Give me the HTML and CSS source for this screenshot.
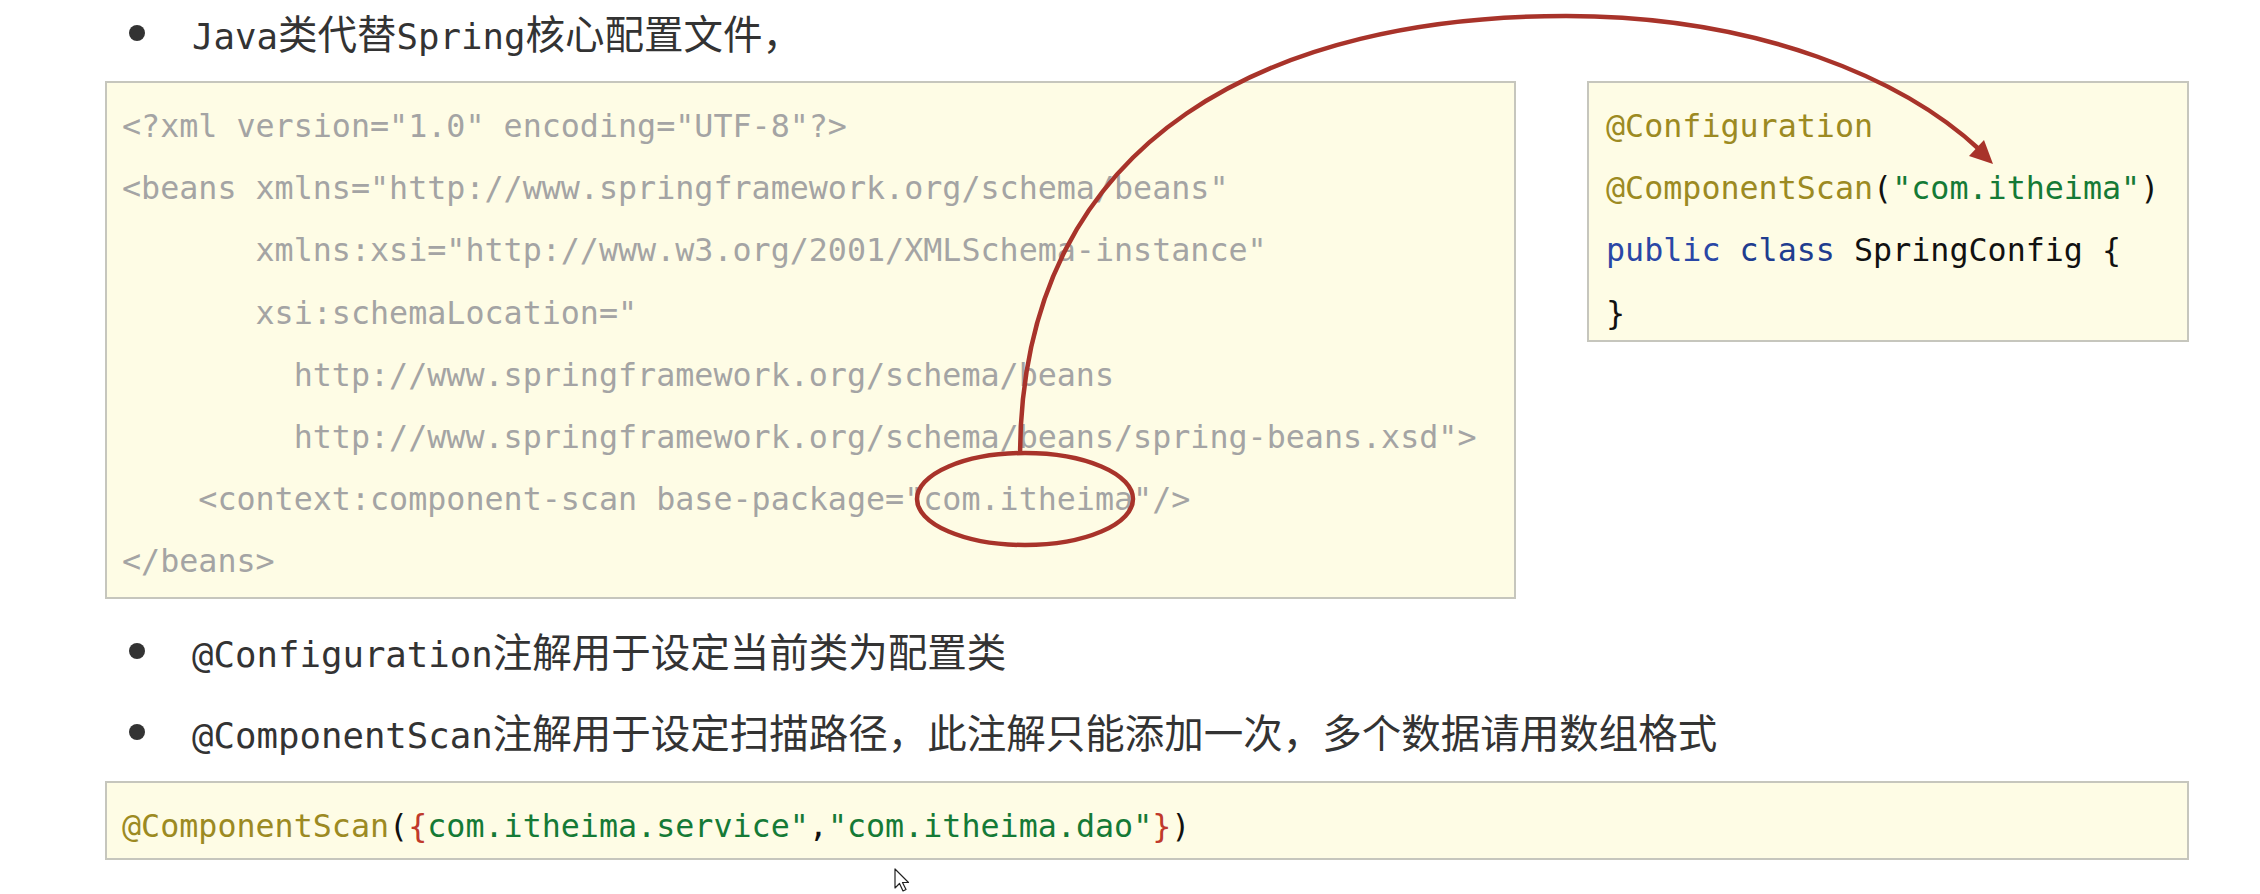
FILE: index.html
```html
<!DOCTYPE html>
<html lang="zh-CN">
<head>
<meta charset="utf-8">
<title>Spring Config</title>
<link rel="stylesheet" href="styles.css">
</head>
<body>
<div class="page">
  <div class="bullet first"><span class="dot"></span><span class="txt"><span class="mono">Java</span>类代替<span class="mono">Spring</span>核心配置文件，</span></div>

  <div class="row">
<pre class="code xml">&lt;?xml version="1.0" encoding="UTF-8"?&gt;
&lt;beans xmlns="http://www.springframework.org/schema/beans"
       xmlns:xsi="http://www.w3.org/2001/XMLSchema-instance"
       xsi:schemaLocation="
         http://www.springframework.org/schema/beans
         http://www.springframework.org/schema/beans/spring-beans.xsd"&gt;
    &lt;context:component-scan base-package="com.itheima"/&gt;
&lt;/beans&gt;</pre>
<pre class="code java"><span class="ann">@Configuration</span>
<span class="ann">@ComponentScan</span>(<span class="str">"com.itheima"</span>)
<span class="kw">public</span> <span class="kw2">class</span> SpringConfig {
}</pre>
  </div>

  <div class="bullet after"><span class="dot"></span><span class="txt"><span class="mono">@Configuration</span>注解用于设定当前类为配置类</span></div>
  <div class="bullet"><span class="dot"></span><span class="txt"><span class="mono">@ComponentScan</span>注解用于设定扫描路径，此注解只能添加一次，多个数据请用数组格式</span></div>

<pre class="code single"><span class="ann">@ComponentScan</span>(<span class="brace">{</span><span class="str">com.itheima.service"</span>,<span class="str">"com.itheima.dao"</span><span class="brace">}</span>)</pre>

  <svg class="annot" width="2260" height="894" viewBox="0 0 2260 894">
    <ellipse cx="1025" cy="499" rx="108" ry="46" fill="none" stroke="#a8332a" stroke-width="4.5"/>
    <path d="M 1020 454 C 1022 130, 1280 16, 1566 16 C 1760 16, 1905 80, 1980 150" fill="none" stroke="#a8332a" stroke-width="4.5"/>
    <polygon points="1993,164 1969,156 1984,140" fill="#a8332a"/>
  </svg>

  <svg class="cursor" width="18" height="26" viewBox="0 0 18 26">
    <path d="M1 1 L1 20 L5.5 15.5 L9 23 L12 21.5 L8.5 14.5 L14.5 14.5 Z" fill="#fff" stroke="#222" stroke-width="1.2" stroke-linejoin="round"/>
  </svg>
</div>
</body>
</html>
```

FILE: styles.css
```css
html, body {
  margin: 0;
  padding: 0;
  background: #ffffff;
}

.page {
  position: relative;
  width: 2260px;
  height: 894px;
  overflow: hidden;
}

.bullet {
  display: flex;
  align-items: center;
  height: 81px;
  padding-left: 129px;
  color: #333333;
  font-family: "Noto Sans CJK SC", sans-serif;
  font-size: 39.5px;
}

.bullet.first {
  height: 62px;
  margin-top: 2px;
}

.bullet.after {
  margin-top: 12px;
}

.dot {
  flex: none;
  width: 16px;
  height: 16px;
  border-radius: 50%;
  background: #333333;
  margin-right: 47px;
}

.txt {
  white-space: nowrap;
  line-height: 1;
}

.mono {
  font-family: "DejaVu Sans Mono", monospace;
  font-size: 35.7px;
}

.row {
  display: flex;
  align-items: flex-start;
  gap: 71px;
  margin: 17px 0 0 105px;
}

.code {
  margin: 0;
  box-sizing: border-box;
  background: #fefce5;
  border: 2px solid #c6c6bd;
  font-family: "DejaVu Sans Mono", monospace;
  font-size: 31.7px;
  line-height: 62.2px;
  white-space: pre;
}

.xml {
  width: 1411px;
  padding: 12px 15px 4px;
  color: #a4a4a4;
}

.java {
  width: 602px;
  height: 261px;
  padding: 12px 17px 0;
  color: #111111;
}

.single {
  width: 2084px;
  margin: 8px 0 0 105px;
  padding: 12px 15px 1px;
  color: #111111;
}

.ann { color: #9c8a22; }
.str { color: #157a36; }
.kw { color: #2a47a6; }
.kw2 { color: #1f3d8f; }
.brace { color: #c0392b; }

.annot {
  position: absolute;
  left: 0;
  top: 0;
  pointer-events: none;
}

.cursor {
  position: absolute;
  left: 894px;
  top: 868px;
}
```
